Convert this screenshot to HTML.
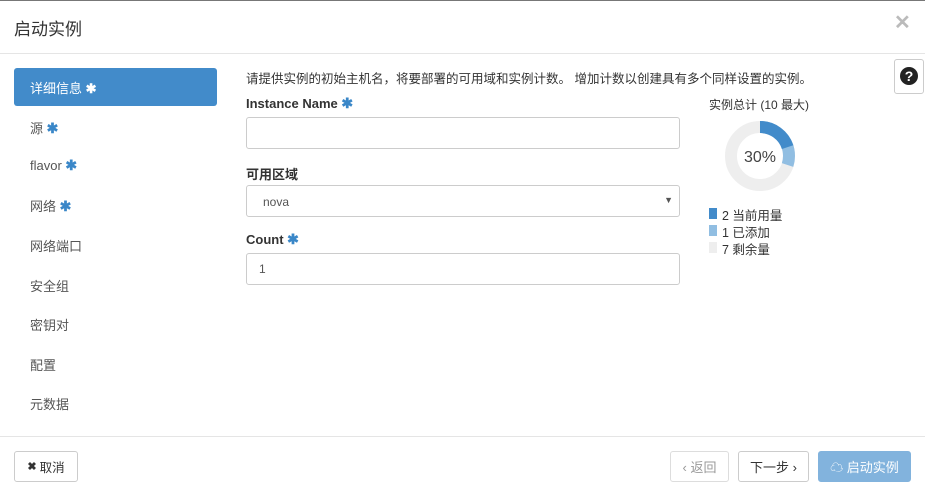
<!DOCTYPE html>
<html><head><meta charset="utf-8"><style>
*{box-sizing:border-box;margin:0;padding:0}
body{width:925px;height:495px;background:#fff;font-family:"Liberation Sans","Noto Sans CJK SC",sans-serif;color:#333;font-size:13px;position:relative;overflow:hidden}
.abs{position:absolute}
.nav{position:absolute;left:30px;color:#555;font-size:13px}
.star{color:#3a87c8;font-weight:bold;font-size:14px}
.inp{position:absolute;left:246px;width:434px;height:32px;border:1px solid #ccc;border-radius:3px;background:#fff;padding:8px 12px;color:#555;font-size:12px}
.lbl{position:absolute;left:246px;font-weight:bold;font-size:13px;color:#333}
.btn{position:absolute;top:451px;height:31px;border:1px solid #ccc;border-radius:3px;background:#fff;font-size:13px;display:flex;align-items:center;justify-content:center}
</style></head><body>
<div class="abs" style="left:0;top:0;width:925px;height:1px;background:#777"></div>
<div class="abs" style="left:14px;top:15px;font-size:17px;color:#333">启动实例</div>
<div class="abs" style="left:894px;top:10px;font-size:20px;color:#bbb;font-weight:bold">✕</div>
<div class="abs" style="left:0;top:53px;width:925px;height:1px;background:#e5e5e5"></div>

<div class="abs" style="left:14px;top:68px;width:203px;height:38px;background:#428bca;border-radius:3px;color:#fff;padding:10px 16px;font-size:13px">详细信息 <span style="color:#fff;font-weight:bold">✱</span></div>
<div class="nav" style="top:118px">源 <span class="star">✱</span></div>
<div class="nav" style="top:157px">flavor <span class="star">✱</span></div>
<div class="nav" style="top:196px">网络 <span class="star">✱</span></div>
<div class="nav" style="top:236px">网络端口</div>
<div class="nav" style="top:276px">安全组</div>
<div class="nav" style="top:315px">密钥对</div>
<div class="nav" style="top:355px">配置</div>
<div class="nav" style="top:394px">元数据</div>

<div class="abs" style="left:246px;top:68px;font-size:12.5px;color:#333">请提供实例的初始主机名，将要部署的可用域和实例计数。 增加计数以创建具有多个同样设置的实例。</div>
<div class="abs" style="left:894px;top:59px;width:30px;height:35px;border:1px solid #ccc;border-radius:3px;background:#fff"></div>
<svg class="abs" style="left:899px;top:66px" width="20" height="20" viewBox="0 0 20 20"><circle cx="10" cy="10" r="9" fill="#222"/><text x="10" y="15" text-anchor="middle" font-family="Liberation Sans" font-weight="bold" font-size="14" fill="#fff">?</text></svg>

<div class="lbl" style="top:95px">Instance Name <span class="star">✱</span></div>
<div class="inp" style="top:117px"></div>
<div class="lbl" style="top:164px">可用区域</div>
<div class="inp" style="top:185px;padding:9px 16px">nova<span style="position:absolute;right:6px;top:9px;font-size:9px;color:#555">▼</span></div>
<div class="lbl" style="top:231px">Count <span class="star">✱</span></div>
<div class="inp" style="top:253px">1</div>

<div class="abs" style="left:709px;top:96px;font-size:12px;color:#333">实例总计 (10 最大)</div>
<svg class="abs" style="left:725px;top:121px" width="70" height="70" viewBox="0 0 70 70">
<circle cx="35" cy="35" r="29" fill="none" stroke="#eee" stroke-width="12"/>
<circle cx="35" cy="35" r="29" fill="none" stroke="#91bee2" stroke-width="12" stroke-dasharray="54.66 200" transform="rotate(-90 35 35)"/>
<circle cx="35" cy="35" r="29" fill="none" stroke="#428bca" stroke-width="12" stroke-dasharray="36.44 200" transform="rotate(-90 35 35)"/>
<text x="35" y="41" text-anchor="middle" font-family="Liberation Sans" font-size="16" fill="#444">30%</text>
</svg>
<div class="abs" style="left:709px;top:208px;width:8px;height:11px;background:#428bca"></div>
<div class="abs" style="left:722px;top:205px;font-size:12.5px">2 当前用量</div>
<div class="abs" style="left:709px;top:225px;width:8px;height:11px;background:#91bee2"></div>
<div class="abs" style="left:722px;top:222px;font-size:12.5px">1 已添加</div>
<div class="abs" style="left:709px;top:242px;width:8px;height:11px;background:#eee"></div>
<div class="abs" style="left:722px;top:239px;font-size:12.5px">7 剩余量</div>

<div class="abs" style="left:0;top:436px;width:925px;height:1px;background:#e5e5e5"></div>
<div class="btn" style="left:14px;width:64px;font-size:12.5px"><b style="font-size:11px;margin-right:3px">✖</b>取消</div>
<div class="btn" style="left:670px;width:59px;color:#999;border-color:#ddd">‹ 返回</div>
<div class="btn" style="left:738px;width:71px">下一步 ›</div>
<div class="btn" style="left:818px;width:93px;background:#82b3dd;border-color:#82b3dd;color:#fff">☁ 启动实例</div>
</body></html>
